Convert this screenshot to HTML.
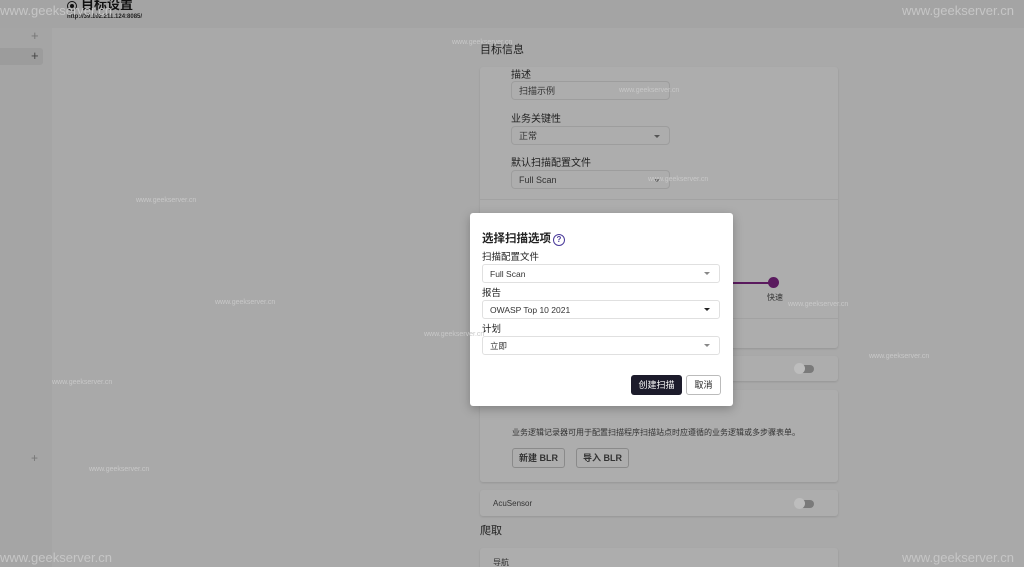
<!DOCTYPE html>
<html><head><meta charset="utf-8"><style>
*{margin:0;padding:0;box-sizing:border-box;line-height:1.2}
html,body{width:1024px;height:567px;overflow:hidden}
body{position:relative;background:#a9a9a9;font-family:"Liberation Sans","Noto Sans CJK SC",sans-serif;color:#222}
.a{position:absolute}
.hdr{left:0;top:0;width:1024px;height:28px;background:#a4a4a4}
.side{left:0;top:28px;width:52px;height:539px;background:#a5a5a5}
.card{position:absolute;left:480px;width:358px;background:#adadad;border-radius:3px;box-shadow:0 1px 2px rgba(0,0,0,.12)}
.inp{position:absolute;left:511px;width:159px;height:19px;border:1px solid #9d9d9d;border-radius:4px;font-size:9px;padding:4px 7px;color:#333}
.lbl{position:absolute;left:511px;font-size:10px;color:#222}
.car{position:absolute;right:9px;top:8px;border:3px solid transparent;border-top:3px solid #555;border-bottom:0}
.wm{position:absolute;color:#c8c8c8;font-size:7px}
.wmb{position:absolute;color:#c6c6c6;font-size:13px}
.tog{position:absolute;width:18px;height:8px;border-radius:4px;background:#7a7a7a}
.tog:before{content:"";position:absolute;left:-2px;top:-2px;width:11px;height:11px;border-radius:50%;background:#bdbdbd}
.btn{position:absolute;height:20px;border:1px solid #8a8a8a;border-radius:3px;font-size:9px;font-weight:bold;text-align:center;line-height:18px;color:#333}
.modal{left:470px;top:213px;width:263px;height:193px;background:#fff;border-radius:3px;box-shadow:0 3px 10px rgba(0,0,0,.25)}
.m .f{position:absolute;left:12px;width:238px;height:19px;border:1px solid #e0e0e0;border-radius:3px;font-size:8.5px;padding:4px 7px;color:#333}
.m .l{position:absolute;left:12px;font-size:9.5px;color:#222}
.m .c{position:absolute;right:9px;top:7px;border:3px solid transparent;border-top:3px solid #888;border-bottom:0}
</style></head><body>
<div class="a hdr"></div>
<div class="a side"></div>
<div class="a" style="left:0;top:48px;width:43px;height:17px;background:#9c9c9c;border-radius:0 3px 3px 0"></div>
<div class="a" style="left:31px;top:28px;font-size:13px;color:#777">+</div>
<div class="a" style="left:31px;top:48px;font-size:13px;color:#444">+</div>
<div class="a" style="left:31px;top:451px;font-size:12px;color:#777">+</div>
<div class="a" style="left:67px;top:1px;width:10px;height:10px;border:1.5px solid #111;border-radius:50%"></div>
<div class="a" style="left:70px;top:4px;width:4px;height:4px;background:#111;border-radius:50%"></div>
<div class="a" style="left:81px;top:-3px;font-size:13px;font-weight:bold;color:#111">目标设置</div>
<div class="a" style="left:67px;top:14px;font-size:6px;color:#222;font-weight:bold">http://39.102.211.124:8085/</div>

<div class="a" style="left:480px;top:44px;font-size:11px;color:#222">目标信息</div>
<div class="card" style="top:67px;height:281px"></div>
<div class="a" style="left:480px;top:199px;width:358px;height:1px;background:#a2a2a2"></div>
<div class="lbl" style="top:70px">描述</div>
<div class="inp" style="top:81px">扫描示例</div>
<div class="lbl" style="top:114px">业务关键性</div>
<div class="inp" style="top:126px">正常<span class="car"></span></div>
<div class="lbl" style="top:158px">默认扫描配置文件</div>
<div class="inp" style="top:170px">Full Scan<span class="car"></span></div>
<div class="a" style="left:720px;top:282px;width:54px;height:2px;background:#5a1a5e"></div>
<div class="a" style="left:768px;top:277px;width:11px;height:11px;border-radius:50%;background:#5a1a5e"></div>
<div class="a" style="left:767px;top:293px;font-size:8px;color:#333">快速</div>
<div class="a" style="left:480px;top:318px;width:358px;height:1px;background:#a2a2a2"></div>

<div class="card" style="top:356px;height:25px"></div>
<div class="tog" style="left:796px;top:365px"></div>
<div class="card" style="top:390px;height:92px"></div>
<div class="a" style="left:512px;top:428px;font-size:8px;color:#333">业务逻辑记录器可用于配置扫描程序扫描站点时应遵循的业务逻辑或多步骤表单。</div>
<div class="btn" style="left:512px;top:448px;width:53px">新建 BLR</div>
<div class="btn" style="left:576px;top:448px;width:53px">导入 BLR</div>
<div class="card" style="top:490px;height:26px"></div>
<div class="a" style="left:493px;top:499px;font-size:8px;color:#333">AcuSensor</div>
<div class="tog" style="left:796px;top:500px"></div>
<div class="a" style="left:480px;top:525px;font-size:11px;color:#222">爬取</div>
<div class="card" style="top:548px;height:30px"></div>
<div class="a" style="left:493px;top:558px;font-size:8px;color:#333">导航</div>

<div class="a modal m">
<div class="a" style="left:12px;top:20px;font-size:11.5px;font-weight:bold;color:#222">选择扫描选项</div>
<div class="a" style="left:83px;top:21px;width:12px;height:12px;border:1.3px solid #4a3a9a;border-radius:50%;font-size:8px;text-align:center;line-height:9.5px;color:#4a3a9a;font-weight:bold">?</div>
<div class="l" style="top:39px">扫描配置文件</div>
<div class="f" style="top:51px">Full Scan<span class="c"></span></div>
<div class="l" style="top:75px">报告</div>
<div class="f" style="top:87px">OWASP Top 10 2021<span class="c" style="border-top-color:#222"></span></div>
<div class="l" style="top:111px">计划</div>
<div class="f" style="top:123px">立即<span class="c"></span></div>
<div class="a" style="left:161px;top:162px;width:51px;height:20px;background:#1c1b2b;border-radius:3px;color:#fff;font-size:9px;text-align:center;line-height:20px">创建扫描</div>
<div class="a" style="left:216px;top:162px;width:35px;height:20px;border:1px solid #bbb;border-radius:3px;color:#222;font-size:9px;text-align:center;line-height:18px">取消</div>
</div>

<div class="wmb" style="left:0;top:3px">www.geekserver.cn</div>
<div class="wmb" style="left:902px;top:3px">www.geekserver.cn</div>
<div class="wmb" style="left:0;top:550px">www.geekserver.cn</div>
<div class="wmb" style="left:902px;top:550px">www.geekserver.cn</div>
<div class="wm" style="left:452px;top:39px">www.geekserver.cn</div>
<div class="wm" style="left:619px;top:87px">www.geekserver.cn</div>
<div class="wm" style="left:648px;top:176px">www.geekserver.cn</div>
<div class="wm" style="left:136px;top:197px">www.geekserver.cn</div>
<div class="wm" style="left:215px;top:299px">www.geekserver.cn</div>
<div class="wm" style="left:424px;top:331px">www.geekserver.cn</div>
<div class="wm" style="left:788px;top:301px">www.geekserver.cn</div>
<div class="wm" style="left:869px;top:353px">www.geekserver.cn</div>
<div class="wm" style="left:52px;top:379px">www.geekserver.cn</div>
<div class="wm" style="left:89px;top:466px">www.geekserver.cn</div>
</body></html>
